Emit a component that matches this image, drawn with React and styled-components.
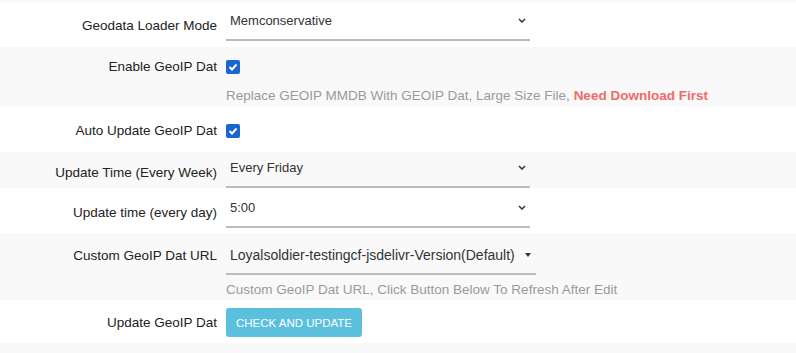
import React from 'react';
import styled, { createGlobalStyle } from 'styled-components';

const GlobalStyle = createGlobalStyle`
  body {
    margin: 0;
    background: #fff;
    font-family: "Liberation Sans", Arial, sans-serif;
  }
`;

const Page = styled.div`
  display: flex;
  flex-direction: column;
  width: 796px;
  height: 353px;
  overflow: hidden;
  background: #f9f9f9;
`;

const Tail = styled.div`
  height: ${p => p.$h}px;
  flex: none;
`;

const Row = styled.div`
  display: flex;
  flex: none;
  background: ${p => (p.$alt ? '#f9f9f9' : '#fff')};
  padding: ${p => p.$pt}px 0 ${p => p.$pb}px;
`;

const Label = styled.div`
  width: 217px;
  flex: none;
  box-sizing: border-box;
  height: 33px;
  padding-top: 8px;
  text-align: right;
  font-size: 13.5px;
  line-height: 20px;
  color: #222;
  white-space: nowrap;
`;

const Field = styled.div`
  margin-left: 9px;
  display: flex;
  flex-direction: column;
  align-items: flex-start;
`;

const Select = styled.div`
  width: 304px;
  height: 33px;
  box-sizing: border-box;
  border-bottom: 2px solid #bbb;
  padding: 5px 4px 0 4px;
  display: flex;
  justify-content: space-between;
  align-items: flex-start;
  font-size: 13px;
  line-height: 16px;
  color: #333;
`;

const Chevron = styled.svg`
  margin-top: 5px;
  flex: none;
`;

const Combo = styled.div`
  width: 310px;
  height: 37px;
  box-sizing: border-box;
  border-bottom: 2px solid #bbb;
  padding: 7px 0 0 4px;
  display: flex;
  align-items: flex-start;
  font-size: 14px;
  line-height: 20px;
  color: #333;
`;

const Caret = styled.svg`
  margin: 8px 0 0 10px;
  flex: none;
`;

const CheckLine = styled.div`
  height: 33px;
  display: flex;
  align-items: flex-start;
`;

const Check = styled.span`
  width: 14px;
  height: 14px;
  margin-top: 11px;
  border-radius: 2px;
  background: #1a64d4;
  display: flex;
  align-items: center;
  justify-content: center;
`;

const Help = styled.div`
  margin-top: ${p => p.$mt}px;
  font-size: 13.5px;
  line-height: 18px;
  color: #999;
  white-space: nowrap;
`;

const Warn = styled.b`
  color: #f06a6a;
`;

const Button = styled.button`
  margin-top: 3px;
  height: 29px;
  width: 136px;
  padding: 0;
  border: none;
  border-radius: 3px;
  background: #5bc0de;
  color: #fff;
  font-family: "Liberation Sans", Arial, sans-serif;
  font-size: 11.5px;
  text-transform: uppercase;
  cursor: pointer;
`;

const SelectBox = ({ value }) => (
  <Select>
    <span>{value}</span>
    <Chevron width="8" height="5" viewBox="0 0 8 5">
      <polyline points="1,1 4,4 7,1" fill="none" stroke="#333" strokeWidth="1.5" />
    </Chevron>
  </Select>
);

const CheckBox = () => (
  <CheckLine>
    <Check>
      <svg width="10" height="8" viewBox="0 0 10 8">
        <polyline points="1.5,4 4,6.5 8.5,1.5" fill="none" stroke="#fff" strokeWidth="2" />
      </svg>
    </Check>
  </CheckLine>
);

export default function App() {
  return (
    <>
      <GlobalStyle />
      <Page>
        <Tail $h={3} />
        <Row $pt={5} $pb={6}>
          <Label>Geodata Loader Mode</Label>
          <Field>
            <SelectBox value="Memconservative" />
          </Field>
        </Row>
        <Row $alt $pt={2} $pb={2}>
          <Label>Enable GeoIP Dat</Label>
          <Field>
            <CheckBox />
            <Help $mt={5}>
              Replace GEOIP MMDB With GEOIP Dat, Large Size File, <Warn>Need Download First</Warn>
            </Help>
          </Field>
        </Row>
        <Row $pt={6} $pb={6}>
          <Label>Auto Update GeoIP Dat</Label>
          <Field>
            <CheckBox />
          </Field>
        </Row>
        <Row $alt $pt={3} $pb={0}>
          <Label>Update Time (Every Week)</Label>
          <Field>
            <SelectBox value="Every Friday" />
          </Field>
        </Row>
        <Row $pt={7} $pb={5}>
          <Label>Update time (every day)</Label>
          <Field>
            <SelectBox value="5:00" />
          </Field>
        </Row>
        <Row $alt $pt={5} $pb={1}>
          <Label>Custom GeoIP Dat URL</Label>
          <Field>
            <Combo>
              <span>Loyalsoldier-testingcf-jsdelivr-Version(Default)</span>
              <Caret width="6" height="4" viewBox="0 0 6 4">
                <polygon points="0,0 6,0 3,4" fill="#333" />
              </Caret>
            </Combo>
            <Help $mt={6}>Custom GeoIP Dat URL, Click Button Below To Refresh After Edit</Help>
          </Field>
        </Row>
        <Row $pt={5} $pb={5}>
          <Label>Update GeoIP Dat</Label>
          <Field>
            <Button>Check and Update</Button>
          </Field>
        </Row>
      </Page>
    </>
  );
}
